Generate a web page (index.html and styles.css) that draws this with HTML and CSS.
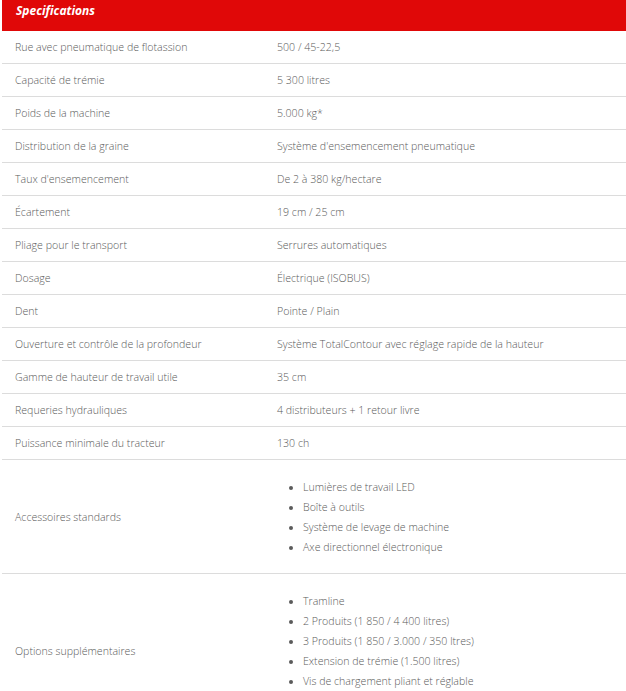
FILE: index.html
```html
<!DOCTYPE html>
<html lang="fr">
<head>
<meta charset="utf-8">
<link rel="stylesheet" href="styles.css">
</head>
<body>
<div class="specs">
  <div class="specs-head">Specifications</div>
  <table class="specs-table">
    <tbody>
      <tr><td class="label">Rue avec pneumatique de flotassion</td><td class="value">500 / 45-22,5</td></tr>
      <tr><td class="label">Capacité de trémie</td><td class="value">5 300 litres</td></tr>
      <tr><td class="label">Poids de la machine</td><td class="value">5.000 kg*</td></tr>
      <tr><td class="label">Distribution de la graine</td><td class="value">Système d'ensemencement pneumatique</td></tr>
      <tr><td class="label">Taux d'ensemencement</td><td class="value">De 2 à 380 kg/hectare</td></tr>
      <tr><td class="label">Écartement</td><td class="value">19 cm / 25 cm</td></tr>
      <tr><td class="label">Pliage pour le transport</td><td class="value">Serrures automatiques</td></tr>
      <tr><td class="label">Dosage</td><td class="value">Électrique (ISOBUS)</td></tr>
      <tr><td class="label">Dent</td><td class="value">Pointe / Plain</td></tr>
      <tr><td class="label">Ouverture et contrôle de la profondeur</td><td class="value">Système TotalContour avec réglage rapide de la hauteur</td></tr>
      <tr><td class="label">Gamme de hauteur de travail utile</td><td class="value">35 cm</td></tr>
      <tr><td class="label">Requeries hydrauliques</td><td class="value">4 distributeurs + 1 retour livre</td></tr>
      <tr><td class="label">Puissance minimale du tracteur</td><td class="value">130 ch</td></tr>
      <tr class="list-row"><td class="label">Accessoires standards</td><td class="value">
        <ul class="bullets">
          <li>Lumières de travail LED</li>
          <li>Boîte à outils</li>
          <li>Système de levage de machine</li>
          <li>Axe directionnel électronique</li>
        </ul>
      </td></tr>
      <tr class="list-row list-row-last"><td class="label">Options supplémentaires</td><td class="value">
        <ul class="bullets">
          <li>Tramline</li>
          <li>2 Produits (1 850 / 4 400 litres)</li>
          <li>3 Produits (1 850 / 3.000 / 350 ltres)</li>
          <li>Extension de trémie (1.500 litres)</li>
          <li>Vis de chargement pliant et réglable</li>
        </ul>
      </td></tr>
    </tbody>
  </table>
</div>
</body>
</html>
```
FILE: styles.css
```css
html, body {
  margin: 0;
  padding: 0;
  background: #fff;
}
body {
  font-family: "Open Sans", "Liberation Sans", sans-serif;
  font-weight: 300;
  font-size: 10.6px;
  color: #5a5a5a;
}
.specs {
  margin-left: 2px;
}
.specs-head {
  background: #e00808;
  color: #fff;
  font-weight: 700;
  font-style: italic;
  font-size: 12px;
  height: 31px;
  line-height: 22px;
  padding-left: 14px;
  box-sizing: border-box;
}
.specs-table {
  width: 100%;
  border-collapse: collapse;
}
.specs-table td {
  border-bottom: 1px solid #dcdcdc;
  height: 32px;
  padding: 0 0 0 13px;
  vertical-align: middle;
  line-height: 20px;
}
.specs-table td.label {
  width: 249px;
}
.list-row td.value {
  padding-top: 17px;
  padding-bottom: 16px;
}
.list-row-last td.value {
  padding-bottom: 36px;
}
.bullets {
  margin: 0;
  padding-left: 26px;
  list-style: disc;
}
.bullets li {
  line-height: 20px;
}
```
